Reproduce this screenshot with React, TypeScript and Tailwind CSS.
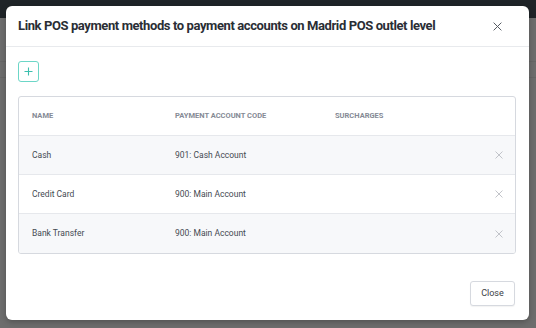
import React from "react";

const rows = [
  { name: "Cash", code: "901: Cash Account", bg: "bg-[#f7f8fa]" },
  { name: "Credit Card", code: "900: Main Account", bg: "bg-white" },
  { name: "Bank Transfer", code: "900: Main Account", bg: "bg-[#f7f8fa]" },
];

function XIcon({ className, size }: { className?: string; size: number }) {
  return (
    <svg width={size} height={size} viewBox="0 0 10 10" className={className} fill="none">
      <path d="M1 1L9 9M9 1L1 9" stroke="currentColor" strokeWidth="1.1" strokeLinecap="round" />
    </svg>
  );
}

export default function App() {
  return (
    <div
      className="relative w-[536px] h-[328px] overflow-hidden bg-[#6d6d6d]"
      style={{ fontFamily: "Roboto, 'Liberation Sans', sans-serif" }}
    >
      <div className="h-[18px] bg-[#1f2428]" />
      <div className="h-[44px] border-b border-[#666]" />
      <div className="h-[16px] border-b border-[#666]" />

      <div className="absolute left-[6px] top-[6px] w-[523px] h-[314px] bg-white rounded-[6px] shadow-[0_2px_6px_rgba(0,0,0,0.25)] flex flex-col">
        <div className="h-[41px] border-b border-[#e8eaed] flex items-center justify-between pl-[12px] pr-[27px] shrink-0">
          <div className="whitespace-nowrap text-[13px] font-bold tracking-[-0.4px] text-[#2a2e35]">
            Link POS payment methods to payment accounts on Madrid POS outlet level
          </div>
          <XIcon size={9} className="text-[#555a62]" />
        </div>

        <div className="flex-1 pl-[12px] pr-[13px] pt-[14px]">
          <div className="w-[21px] h-[21px] border border-[#6cd6c7] rounded-[3px] flex items-center justify-center text-[#3cbfae]">
            <svg width="9" height="9" viewBox="0 0 9 9">
              <path d="M4.5 0.5V8.5M0.5 4.5H8.5" stroke="currentColor" strokeWidth="1.1" />
            </svg>
          </div>

          <div className="mt-[14px] border border-[#d6d9df] rounded-[3px] overflow-hidden">
            <div className="h-[39px] flex items-center border-b border-[#e6e8ec] text-[7.5px] font-bold text-[#858a95]">
              <div className="w-[156px] pl-[13px]">NAME</div>
              <div className="w-[160px]">PAYMENT ACCOUNT CODE</div>
              <div>SURCHARGES</div>
            </div>
            {rows.map((r, i) => (
              <div
                key={r.name}
                className={`h-[39px] flex items-center text-[8.5px] text-[#454a52] ${r.bg} ${i < rows.length - 1 ? "border-b border-[#e6e8ec]" : ""}`}
              >
                <div className="w-[156px] pl-[13px]">{r.name}</div>
                <div className="flex-1">{r.code}</div>
                <div className="pr-[12px]">
                  <XIcon size={8} className="text-[#b9bcc2]" />
                </div>
              </div>
            ))}
          </div>
        </div>

        <div className="flex justify-end pr-[14px] pb-[14px] shrink-0">
          <button className="w-[45px] h-[25px] border border-[#d6d9df] rounded-[3px] bg-white text-[9px] text-[#3a3e45] shadow-[0_1px_1px_rgba(0,0,0,0.05)]">
            Close
          </button>
        </div>
      </div>
    </div>
  );
}
